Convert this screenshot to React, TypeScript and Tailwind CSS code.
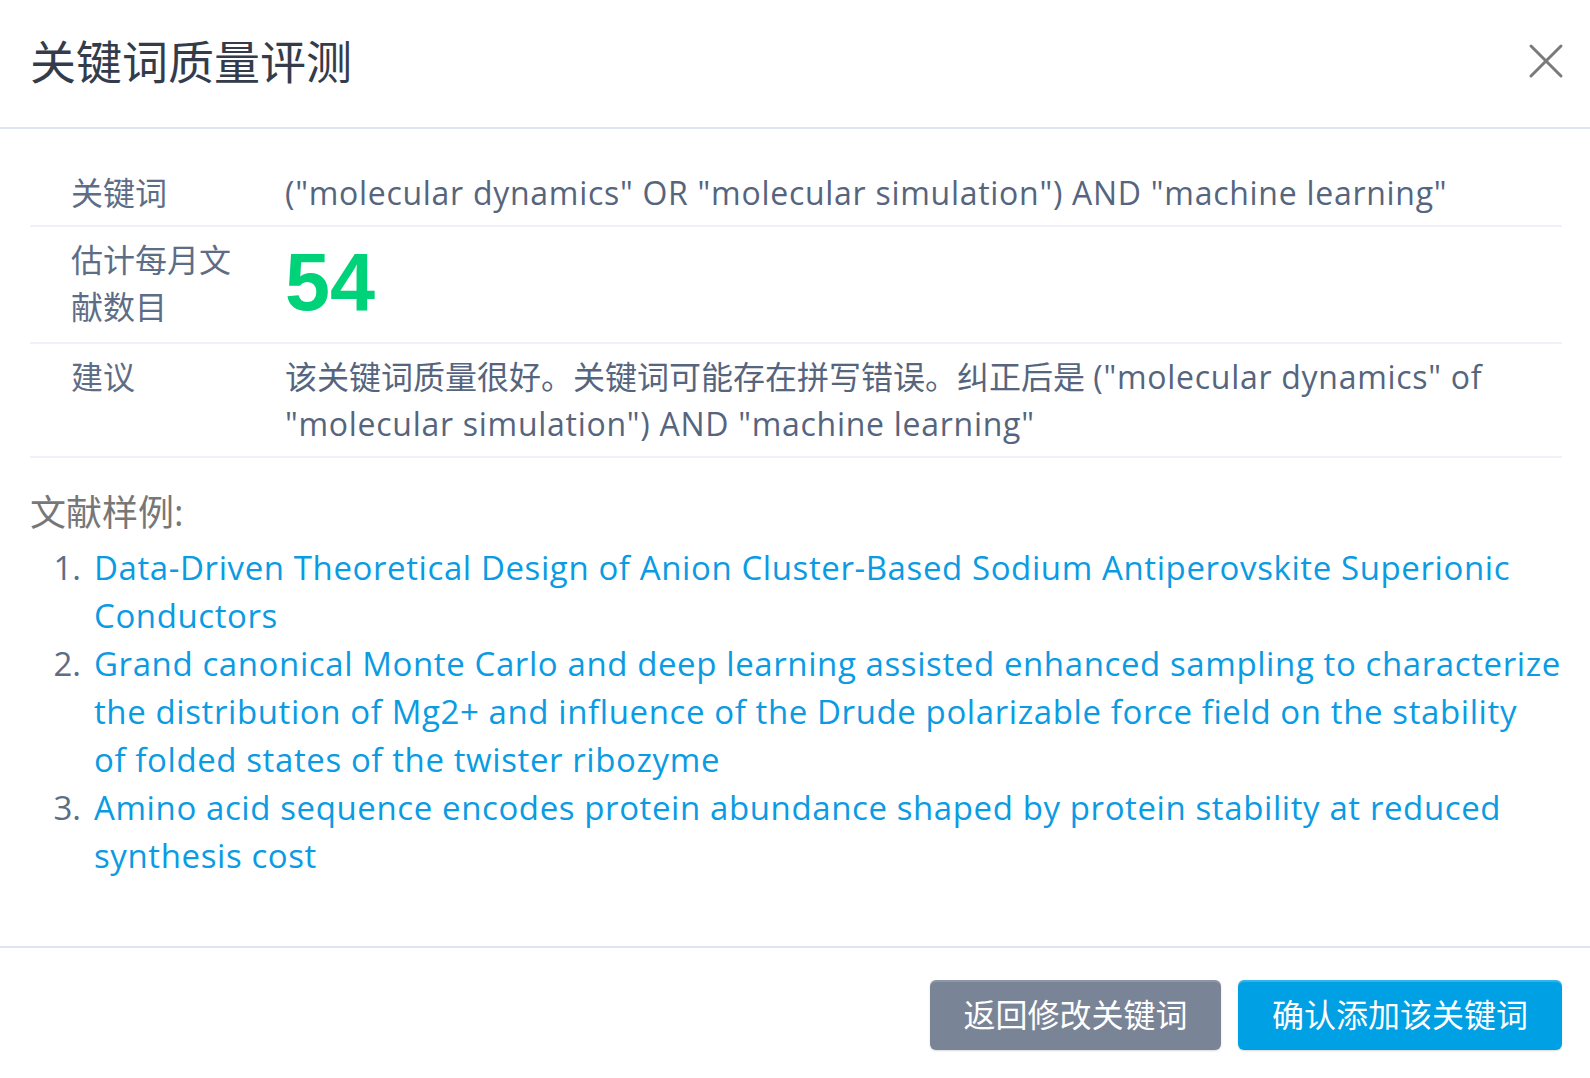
const font = { fontFamily: '"Open Sans", "Noto Sans CJK SC", sans-serif' }

const keyword = '("molecular dynamics" OR "molecular simulation") AND "machine learning"'

// lines broken where the dialog breaks them
const papers = [
  ["Data-Driven Theoretical Design of Anion Cluster-Based Sodium Antiperovskite Superionic", "Conductors"],
  [
    "Grand canonical Monte Carlo and deep learning assisted enhanced sampling to characterize",
    "the distribution of Mg2+ and influence of the Drude polarizable force field on the stability",
    "of folded states of the twister ribozyme",
  ],
  ["Amino acid sequence encodes protein abundance shaped by protein stability at reduced", "synthesis cost"],
]

export default function App() {
  return (
    <div className="w-[1590px] h-[1078px] bg-white flex flex-col" style={font}>
      {/* header */}
      <div className="h-[129px] shrink-0 flex items-center justify-between pl-[30px] pr-[26px] border-b-2 border-[#dbe5f3]">
        <h1 className="text-[46px] leading-none text-[#343c4b] pb-[6px]">关键词质量评测</h1>
        <button className="w-[36px] h-[36px] mb-[6px] flex items-center justify-center">
          <svg width="36" height="36" viewBox="0 0 36 36" fill="none" stroke="#7a7a7a" strokeWidth="3" strokeLinecap="round">
            <line x1="3" y1="3" x2="33" y2="33" />
            <line x1="33" y1="3" x2="3" y2="33" />
          </svg>
        </button>
      </div>

      {/* body */}
      <div className="flex-1 pl-[30px] pr-[28px] pt-[31px]">
        <div className="text-[32px] leading-[47px]">
          <div className="flex border-b-2 border-[#eef2f8] py-[9px]">
            <div className="w-[255px] shrink-0 pl-[41px] pr-[60px] text-[#5e6d86]">关键词</div>
            <div className="flex-1 text-[#56657e] tracking-[0.72px]">{keyword}</div>
          </div>
          <div className="flex border-b-2 border-[#eef2f8] py-[9px]">
            <div className="w-[255px] shrink-0 pl-[41px] pr-[50px] text-[#5e6d86]">估计每月文献数目</div>
            <div
              className="flex-1 text-[81px] leading-[92px] pb-[5px] font-bold text-[#00d27a]"
              style={{ fontFamily: '"Liberation Sans", sans-serif' }}
            >
              54
            </div>
          </div>
          <div className="flex border-b-2 border-[#eef2f8] py-[9px]">
            <div className="w-[255px] shrink-0 pl-[41px] pr-[50px] text-[#5e6d86]">建议</div>
            <div className="flex-1 text-[#56657e] whitespace-nowrap">
              <div>
                该关键词质量很好。关键词可能存在拼写错误。纠正后是{" "}
                <span className="tracking-[0.72px]">("molecular dynamics" of</span>
              </div>
              <div className="tracking-[0.72px]">"molecular simulation") AND "machine learning"</div>
            </div>
          </div>
        </div>

        <div className="mt-[31px] text-[36px] leading-[47px] text-[#777777]">文献样例:</div>

        <ol className="mt-[8px] text-[33px] leading-[48px]">
          {papers.map((lines, i) => (
            <li key={i} className="flex">
              <span className="w-[64px] shrink-0 text-right pr-[13px] text-[#5e6d86]">{i + 1}.</span>
              <a href="#" className="flex-1 text-[#0a9be3] tracking-[0.6px] whitespace-nowrap">
                {lines.map((l) => (
                  <span key={l} className="block">{l}</span>
                ))}
              </a>
            </li>
          ))}
        </ol>
      </div>

      {/* footer */}
      <div className="h-[132px] shrink-0 border-t-2 border-[#dbe5f3] flex justify-end items-start gap-[17px] pt-[32px] pr-[28px]">
        <button className="h-[70px] w-[291px] rounded-[6px] bg-[#7a8497] text-white text-[32px] shadow-[0_1px_2px_rgba(0,0,0,0.15),inset_0_2px_0_rgba(255,255,255,0.15)]">
          返回修改关键词
        </button>
        <button className="h-[70px] w-[324px] rounded-[6px] bg-[#00a0e4] text-white text-[32px] shadow-[0_1px_2px_rgba(0,0,0,0.15),inset_0_2px_0_rgba(255,255,255,0.2)]">
          确认添加该关键词
        </button>
      </div>
    </div>
  )
}
